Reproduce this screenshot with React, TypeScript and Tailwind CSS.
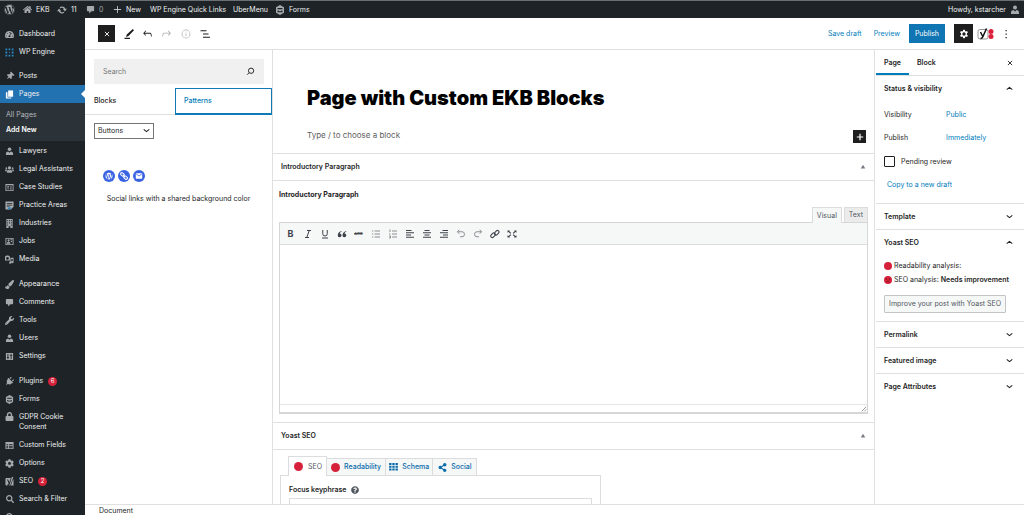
import React from "react";
import {
  FaWordpress,
  FaHome,
  FaTachometerAlt,
  FaThumbtack,
  FaPaintBrush,
  FaWrench,
  FaPlug,
  FaLock,
  FaUsers,
  FaCog,
  FaSearch,
  FaShareAlt,
  FaQuestionCircle,
} from "react-icons/fa";

type SvgProps = { className?: string; children: React.ReactNode; box?: string };

function Svg({ className = "size-[9px]", children, box = "0 0 20 20" }: SvgProps) {
  return (
    <svg viewBox={box} className={className} fill="currentColor" aria-hidden="true">
      {children}
    </svg>
  );
}

const PersonIcon = ({ className }: { className?: string }) => (
  <Svg className={className}>
    <circle cx="10" cy="5" r="4" />
    <path d="M2 18v-3c0-3 2-4.500 5-5l3 3 3-3c3 .5 5 2 5 5v3z" />
  </Svg>
);
const CommentIcon = ({ className }: { className?: string }) => (
  <Svg className={className}>
    <path d="M4 2h12c1 0 2 1 2 2v8c0 1-1 2-2 2h-4l-5 5v-5H4c-1 0-2-1-2-2V4c0-1 1-2 2-2z" />
  </Svg>
);
const GravityIcon = ({ className }: { className?: string }) => (
  <Svg className={className}>
    <path
      fillRule="evenodd"
      d="M10 0l8 4.500v11L10 20l-8-4.500v-11zM5 6v2.500h10V6zM5 11v3.500h10V11h-2.500v1.500h-5V11z"
    />
  </Svg>
);
const PagesIcon = () => (
  <Svg>
    <path d="M7 1h11v14H7z" />
    <path d="M2 5h3.500v11.500H14V19H2z" />
  </Svg>
);
const EngineIcon = () => (
  <Svg className="size-[9px] text-[#2687c4]">
    <path d="M1 1h4v4H1zM8 1h4v4H8zM15 1h4v4h-4zM1 8h4v4H1zM15 8h4v4h-4zM1 15h4v4H1zM8 15h4v4H8zM15 15h4v4h-4zM9 9h2v2H9z" />
  </Svg>
);
const CardIcon = () => (
  <Svg>
    <path
      fillRule="evenodd"
      d="M1 2h18v16H1zM3 5v11h14V5zM5 7h4v3H5zM11 7h4v1.500h-4zM11 10h4v1.500h-4zM5 12h4v2H5zM11 13h4v1.500h-4z"
    />
  </Svg>
);
const NoteIcon = () => (
  <Svg>
    <path fillRule="evenodd" d="M1 1h18v12l-6 6H1zM4 5v1.500h12V5zM4 8.500V10h12V8.500zM4 12v1.500h6V12z" />
    <path d="M7 14h6v4H7z" fill="#2687c4" />
  </Svg>
);
const BuildingIcon = () => (
  <Svg>
    <path
      fillRule="evenodd"
      d="M3 0h14v20h-5v-4H8v4H3zM5 2v3h2V2zM9 2v3h2V2zM13 2v3h2V2zM5 7v3h2V7zM9 7v3h2V7zM13 7v3h2V7zM5 12v3h2v-3zM13 12v3h2v-3z"
    />
  </Svg>
);
const JobsIcon = () => (
  <Svg>
    <path fillRule="evenodd" d="M1 2h18v16H1zM3 4v12h14V4z" />
    <circle cx="8" cy="7.500" r="2.300" />
    <path d="M4 15c0-3 1-4.500 4-4.500s4 1.500 4 4.500zM12 5h4v2h-4zM13 9h3v2h-3z" />
  </Svg>
);
const MediaIcon = () => (
  <Svg>
    <path
      fillRule="evenodd"
      d="M0 3h2l1-2h5l1 2h2v9H0zM5.500 4.500a3 3 0 100 6 3 3 0 000-6z"
    />
    <path d="M13 6h6v10a2.500 2.500 0 11-2-2.500V9h-3v8a2.500 2.500 0 11-2-2.500V6z" />
  </Svg>
);
const SettingsIcon = () => (
  <Svg>
    <path
      fillRule="evenodd"
      d="M2 2h16v16H2zM5.500 4v7H4v2h1.500v3h2v-3H9v-2H7.500V4zM12.500 4v3H11v2h1.500v7h2V9H16V7h-1.500V4z"
    />
  </Svg>
);
const TableIcon = () => (
  <Svg>
    <path
      fillRule="evenodd"
      d="M1 2h18v16H1zM3 7v2h4V7zM9 7v2h8V7zM3 10.500v2h4v-2zM9 10.500v2h8v-2zM3 14v2h4v-2zM9 14v2h8v-2z"
    />
  </Svg>
);
const YoastIcon = ({ className }: { className?: string }) => (
  <Svg className={className}>
    <path
      fillRule="evenodd"
      d="M4 2h9l-3.500 9.500L7 5.500H4.500l3.700 9c-.5 1.500-1.200 2-2.700 2V19H4c-2 0-3-1-3-3V5c0-2 1-3 3-3zM15 0h3.500l-7 19H8c2-1 2.500-2 3-4zM18 5c1 1 1 1.500 1 3v11h-6z"
    />
  </Svg>
);
const Chevron = ({ up = false }: { up?: boolean }) => (
  <svg viewBox="0 0 10 10" className="size-[7px] text-[#1e1e1e]" fill="none" stroke="currentColor" strokeWidth="1.500" aria-hidden="true">
    <path d={up ? "M1 6.500L5 3.500l4 3" : "M1 3.500L5 6.500l4-3"} />
  </svg>
);

type Item = { name: string; icon: React.ReactNode; badge?: string; active?: boolean; tall?: boolean; iconOnly?: boolean };

const fa = "size-[9px]";

const topItems: Item[] = [
  { name: "Dashboard", icon: <FaTachometerAlt className={fa} /> },
  { name: "WP Engine", icon: <EngineIcon /> },
];
const pageItems: Item[] = [
  { name: "Posts", icon: <FaThumbtack className="size-2 rotate-45" /> },
  { name: "Pages", icon: <PagesIcon />, active: true },
];
const typeItems: Item[] = [
  { name: "Lawyers", icon: <PersonIcon /> },
  { name: "Legal Assistants", icon: <FaUsers className={fa} /> },
  { name: "Case Studies", icon: <CardIcon /> },
  { name: "Practice Areas", icon: <NoteIcon /> },
  { name: "Industries", icon: <BuildingIcon /> },
  { name: "Jobs", icon: <JobsIcon /> },
  { name: "Media", icon: <MediaIcon /> },
];
const siteItems: Item[] = [
  { name: "Appearance", icon: <FaPaintBrush className={fa} /> },
  { name: "Comments", icon: <CommentIcon /> },
  { name: "Tools", icon: <FaWrench className={fa} /> },
  { name: "Users", icon: <PersonIcon /> },
  { name: "Settings", icon: <SettingsIcon /> },
];
const pluginItems: Item[] = [
  { name: "Plugins", icon: <FaPlug className="size-[9px] rotate-45" />, badge: "6" },
  { name: "Forms", icon: <GravityIcon /> },
  { name: "GDPR Cookie Consent", icon: <FaLock className={fa} />, tall: true },
  { name: "Custom Fields", icon: <TableIcon /> },
  { name: "Options", icon: <FaCog className={fa} /> },
  { name: "SEO", icon: <YoastIcon />, badge: "2" },
  { name: "Search & Filter", icon: <FaSearch className="size-2" /> },
  { name: "More", icon: <FaSearch className="size-2" />, iconOnly: true },
];

function MenuGroup({ items, className = "" }: { items: Item[]; className?: string }) {
  return (
    <ul className={className}>
      {items.map((item) => (
        <li key={item.name}>
          <a
            href="#"
            aria-label={item.iconOnly ? item.name : undefined}
            className={
              "relative flex gap-[5px] pl-[5px] pr-1 text-[#f0f0f1] " +
              (item.tall ? "h-7 items-start pt-1 " : "h-[18px] items-center ") +
              (item.active ? "bg-[#2271b1]" : "")
            }
          >
            <span className={"flex w-[9px] shrink-0 justify-center " + (item.active ? "text-white" : "text-[#a7aaad]")}>{item.icon}</span>
            {!item.iconOnly && <span className="leading-[10px]">{item.name}</span>}
            {item.badge && (
              <span className="flex size-[9px] items-center justify-center rounded-full bg-[#d6213a] text-[6px] leading-none text-white">
                {item.badge}
              </span>
            )}
            {item.active && (
              <span className="absolute right-0 top-1/2 size-0 -translate-y-1/2 border-y-4 border-r-4 border-y-transparent border-r-white" />
            )}
          </a>
        </li>
      ))}
    </ul>
  );
}

function AdminBar() {
  return (
    <header className="flex h-[18px] shrink-0 items-center border-t border-[#687076] bg-[#1d2327] pl-1 pr-1 text-[#f0f0f1]">
      <a href="#" aria-label="About WordPress" className="w-[19px] text-[#a7aaad]">
        <FaWordpress className="size-[11px]" />
      </a>
      <a href="#" className="flex w-[34px] items-center gap-1">
        <FaHome className="size-[9px] text-[#a7aaad]" />
        EKB
      </a>
      <a href="#" className="flex w-[29px] items-center gap-1">
        <Svg className="size-[10px] text-[#a7aaad]">
          <path d="M10 3c3 0 5.500 1.800 6.500 4.500H20L15.800 13 11.500 7.500h2.300A4.800 4.800 0 0010 5.400c-1.200 0-2.300.5-3.100 1.200L5.200 4.900A7 7 0 0110 3zM4.200 7l4.300 5.500H6.200a4.800 4.800 0 003.800 2.100c1.200 0 2.300-.5 3.100-1.200l1.700 1.700A7 7 0 013.500 12.500H0z" />
        </Svg>
        11
      </a>
      <a href="#" className="flex w-[27px] items-center gap-1 text-[#a7aaad]">
        <CommentIcon />0
      </a>
      <a href="#" className="flex w-[37px] items-center gap-1">
        <Svg className="size-[9px] text-[#c3c4c7]">
          <path d="M9 2h2v7h7v2h-7v7H9v-7H2V9h7z" />
        </Svg>
        New
      </a>
      <a href="#" className="w-[83px]">WP Engine Quick Links</a>
      <a href="#" className="w-[42px]">UberMenu</a>
      <a href="#" className="flex items-center gap-1">
        <GravityIcon className="size-[10px] text-[#a7aaad]" />
        Forms
      </a>
      <a href="#" className="ml-auto flex items-center gap-1">
        Howdy, kstarcher
        <PersonIcon className="size-[10px] text-[#a7aaad]" />
      </a>
    </header>
  );
}

function EditorHeader() {
  return (
    <div className="flex h-8 shrink-0 items-center justify-between border-b border-[#e0e0e0] pl-[13px] pr-3">
      <div className="flex items-center text-[#1e1e1e]">
        <button aria-label="Close inserter" className="mr-1 flex h-[17px] w-[17px] items-center justify-center bg-[#1e1e1e] text-white">
          <svg viewBox="0 0 10 10" className="size-[6px]" stroke="currentColor" strokeWidth="1.500" aria-hidden="true">
            <path d="M1.500 1.500l7 7M8.500 1.500l-7 7" />
          </svg>
        </button>
        <button aria-label="Edit" className="flex w-[19px] justify-center">
          <Svg className="size-3" box="0 0 24 24">
            <path d="M19.500 2l2.500 2.500L11 16l-5 2 1.500-5zM3 19.500h11V22H3z" />
          </Svg>
        </button>
        <button aria-label="Undo" className="flex w-[19px] justify-center">
          <Svg className="size-[13px]" box="0 0 24 24">
            <path d="M18.300 11.700c-.6-.6-1.400-.9-2.300-.9H6.700l2.900-3.300-1.100-1-4.500 5L8.500 16l1-1-2.700-2.700H16c.5 0 .9.200 1.300.5 1 1 1 3.400 1 4.500v.3h1.500v-.2c0-1.500 0-4.300-1.500-5.700z" />
          </Svg>
        </button>
        <button aria-label="Redo" className="flex w-[19px] justify-center text-[#b0b0b0]">
          <Svg className="size-[13px]" box="0 0 24 24">
            <path d="M15.600 6.500l-1.100 1 2.900 3.300H8c-.9 0-1.700.3-2.300.9-1.400 1.500-1.400 4.200-1.400 5.600v.2h1.500v-.3c0-1.100 0-3.500 1-4.500.3-.3.700-.5 1.300-.5h9.200L14.500 15l1.100 1.100 4.600-4.600z" />
          </Svg>
        </button>
        <button aria-label="Details" className="flex w-[19px] justify-center text-[#b0b0b0]">
          <Svg className="size-3" box="0 0 24 24">
            <path d="M12 3.200a8.800 8.800 0 100 17.600 8.800 8.800 0 000-17.600zm0 16.100a7.300 7.300 0 110-14.600 7.300 7.300 0 010 14.600zM11.200 11h1.600v5.500h-1.600zM11.200 7.500h1.600v1.700h-1.600z" />
          </Svg>
        </button>
        <button aria-label="List view" className="flex w-[19px] justify-center">
          <Svg className="size-3" box="0 0 24 24">
            <path d="M3 4.500h12v2H3zM8 11h11v2H8zM8 17.500h14v2H8z" />
          </Svg>
        </button>
      </div>
      <div className="flex items-center text-[#007cba]">
        <button className="mr-3">Save draft</button>
        <button className="mr-[9px]">Preview</button>
        <button className="mr-[9px] h-[19px] bg-[#0f75b3] px-[6px] text-white">Publish</button>
        <button aria-label="Settings" className="flex size-[19px] items-center justify-center bg-[#1e1e1e] text-white">
          <svg viewBox="0 0 24 24" className="size-[10px]" fill="currentColor" aria-hidden="true">
            <path
              fillRule="evenodd"
              d="M10 2h4l.5 3 2 1.100L19.400 5l2 3.400-2.400 2v3.200l2.400 2-2 3.400-2.900-1.100-2 1.100-.5 3h-4l-.5-3-2-1.100L4.600 19l-2-3.400 2.400-2v-3.200l-2.400-2L4.600 5l2.900 1.100 2-1.100zM12 8a4 4 0 100 8 4 4 0 000-8z"
            />
          </svg>
        </button>
        <button aria-label="Yoast SEO" className="ml-1 flex w-[18px] items-center">
          <svg viewBox="0 0 34 24" className="h-3 w-[17px]" aria-hidden="true">
            <rect x="2" y="3" width="20" height="19" rx="4" fill="#fff" stroke="#777" strokeWidth="1.500" />
            <path d="M7 8l4.500 9M19 1l-7.500 17c-.8 2-2 3-4.500 3" fill="none" stroke="#111" strokeWidth="3" />
            <circle cx="28" cy="7" r="5" fill="#dc1f3b" />
            <circle cx="28" cy="17" r="5" fill="#dc1f3b" />
          </svg>
        </button>
        <button aria-label="Options" className="flex w-[17px] justify-end text-[#1e1e1e]">
          <Svg className="size-3" box="0 0 24 24">
            <path d="M11 4h2.500v2.500H11zM11 11h2.500v2.500H11zM11 18h2.500v2.500H11z" />
          </Svg>
        </button>
      </div>
    </div>
  );
}

function Inserter() {
  return (
    <section className="w-[188px] shrink-0 border-r border-[#e0e0e0] pt-[9px]">
      <label className="ml-[9px] mr-2 flex h-[25px] items-center bg-[#f0f0f0] px-[9px]">
        <input type="search" aria-label="Search" placeholder="Search" className="min-w-0 flex-1 bg-transparent outline-none placeholder:text-[#757575]" />
        <svg viewBox="0 0 24 24" className="size-[9px]" fill="none" stroke="#1e1e1e" strokeWidth="2.500" aria-hidden="true">
          <circle cx="13.500" cy="10" r="7" />
          <path d="M8.500 15L3 20.500" />
        </svg>
      </label>
      <div role="tablist" className="mt-1 grid h-[27px] grid-cols-[90px_1fr] border-b border-[#e0e0e0] font-medium">
        <button role="tab" className="pl-[9px] text-left">Blocks</button>
        <button role="tab" aria-selected="true" className="-mb-px border border-b-2 border-[#0f7ab5] pl-2 text-left text-[#007cba]">
          Patterns
        </button>
      </div>
      <div className="relative ml-[9px] mt-2 w-[60px]">
        <select aria-label="Pattern category" className="h-4 w-full appearance-none border border-[#757575] bg-white pl-[3px] text-[#1e1e1e]">
          <option>Buttons</option>
        </select>
        <span className="pointer-events-none absolute right-1 top-1">
          <Chevron />
        </span>
      </div>
      <div className="ml-[18px] mt-[31px] flex gap-[3px] text-white">
        <a href="#" aria-label="WordPress" className="flex size-3 items-center justify-center rounded-full bg-[#3962e3]">
          <FaWordpress className="size-2" />
        </a>
        <a href="#" aria-label="Link" className="flex size-3 items-center justify-center rounded-full bg-[#3962e3]">
          <svg viewBox="0 0 20 20" className="size-2" fill="none" stroke="currentColor" strokeWidth="2.500" aria-hidden="true">
            <rect x="1" y="3" width="10" height="6" rx="3" transform="rotate(40 6 6)" />
            <rect x="9" y="11" width="10" height="6" rx="3" transform="rotate(40 14 14)" />
            <path d="M7 7l6 6" />
          </svg>
        </a>
        <a href="#" aria-label="Mail" className="flex size-3 items-center justify-center rounded-full bg-[#3962e3]">
          <svg viewBox="0 0 20 20" className="size-2" aria-hidden="true">
            <rect x="2" y="3" width="16" height="14" rx="1.500" fill="currentColor" />
            <path d="M3 5l7 5 7-5" fill="none" stroke="#3962e3" strokeWidth="2" />
          </svg>
        </a>
      </div>
      <p className="mt-3 text-center">Social links with a shared background color</p>
    </section>
  );
}

const line = (d: string) => (
  <svg viewBox="0 0 20 20" className="size-[10px]" fill="none" stroke="currentColor" strokeWidth="2" aria-hidden="true">
    <path d={d} />
  </svg>
);

const tools: { name: string; icon: React.ReactNode; dim?: boolean }[] = [
  { name: "Bold", icon: <span className="text-[9px] font-bold">B</span> },
  { name: "Italic", icon: line("M8 3h8M4 17h8M12.500 3l-5 14") },
  { name: "Underline", icon: line("M5.500 2v7.500a4.500 4.500 0 009 0V2M4 18h12") },
  {
    name: "Blockquote",
    icon: (
      <Svg className="size-[10px]">
        <path d="M9 4C6 4.500 1.500 7 1.500 12.500A3.800 3.800 0 105.500 9C6 7 7.500 6 9 5.500zM18.500 4c-3 .5-7.500 3-7.500 8.500A3.800 3.800 0 1015 9c.5-2 2-3 3.500-3.500z" />
      </Svg>
    ),
  },
  { name: "Strikethrough", icon: <span className="text-[4px] font-medium line-through">ABC</span> },
  { name: "Bulleted list", icon: line("M7 4h11M7 10h11M7 16h11M2 4h2.500M2 10h2.500M2 16h2.500"), dim: true },
  { name: "Numbered list", icon: line("M8 4h10M8 10h10M8 16h10M4 1v5M2 10h3M2 14h3v4H2"), dim: true },
  { name: "Align left", icon: line("M2 3h11M2 7.500h16M2 12h10M2 16.500h16") },
  { name: "Align center", icon: line("M5 3h10M2 7.500h16M5 12h10M2 16.500h16") },
  { name: "Align right", icon: line("M7 3h11M2 7.500h16M8 12h10M2 16.500h16") },
  { name: "Undo", icon: line("M6.500 1.500L3 5.500l3.500 4M3 5.500h9a5 5 0 010 10H8"), dim: true },
  { name: "Redo", icon: line("M13.500 1.500L17 5.500l-3.500 4M17 5.500H8a5 5 0 000 10h4"), dim: true },
  {
    name: "Insert link",
    icon: (
      <svg viewBox="0 0 20 20" className="size-[10px]" fill="none" stroke="currentColor" strokeWidth="2.200" aria-hidden="true">
        <rect x="1" y="9.500" width="10" height="6" rx="3" transform="rotate(-45 6 12.500)" />
        <rect x="8.500" y="4.500" width="10" height="6" rx="3" transform="rotate(-45 13.500 7.500)" />
      </svg>
    ),
  },
  {
    name: "Fullscreen",
    icon: (
      <Svg className="size-[10px]">
        <path d="M1 3h5L4.800 4.500 8.500 8 7 9.500 3 6 1 7.500zM19 3h-5l1.200 1.500L11.500 8 13 9.500 17 6l2 1.500zM1 17h5l-1.200-1.500 3.700-3.500L7 10.500 3 14l-2-1.500zM19 17h-5l1.200-1.500-3.700-3.500 1.500-1.500L17 14l2-1.500z" />
      </Svg>
    ),
  },
];

function PanelTitle({ children }: { children: React.ReactNode }) {
  return (
    <h2 className="flex h-7 items-center justify-between border-y border-[#e0e0e0] pl-2 pr-2 font-semibold">
      {children}
      <svg viewBox="0 0 8 8" className="size-[6px]" fill="#787c82" aria-hidden="true">
        <path d="M4 1l3 5h-6z" />
      </svg>
    </h2>
  );
}

function Editor() {
  return (
    <main className="min-w-0 flex-1 overflow-hidden">
      <div className="pl-[34px] pr-2 pt-[34px]">
        <h1 className="text-[20px] font-black leading-7 text-black">Page with Custom EKB Blocks</h1>
        <div className="mt-[18px] flex h-[13px] items-start">
          <input aria-label="Block" placeholder="Type / to choose a block" className="min-w-0 flex-1 text-[8px] outline-none placeholder:text-[#606060]" />
          <button aria-label="Add block" className="flex size-[13px] items-center justify-center bg-[#1e1e1e] text-white">
            <svg viewBox="0 0 10 10" className="size-2" stroke="currentColor" strokeWidth="1.500" aria-hidden="true">
              <path d="M5 1v8M1 5h8" />
            </svg>
          </button>
        </div>
      </div>
      <div className="mt-[10px]">
        <PanelTitle>Introductory Paragraph</PanelTitle>
        <div className="px-[6px] pb-2">
          <label htmlFor="intro" className="mt-[9px] block font-bold leading-[10px]">Introductory Paragraph</label>
          <div className="mt-[7px] flex h-[15px] items-stretch justify-end gap-[2px] text-[#50575e]">
            <button className="relative z-10 -mb-px border border-b-0 border-[#dcdcde] bg-[#f6f7f7] px-1">Visual</button>
            <button className="border border-b-0 border-[#dcdcde] bg-[#ebebeb] px-1">Text</button>
          </div>
          <div className="border border-[#d5d6d8] border-b-2">
            <div className="flex h-[22px] items-center border-b border-[#dcdcde] bg-[#f6f7f7] pl-[2px]">
              {tools.map((t) => (
                <button
                  key={t.name}
                  aria-label={t.name}
                  className={"flex w-[17px] items-center justify-center leading-none " + (t.dim ? "text-[#8c8f94]" : "text-[#3c434a]")}
                >
                  {t.icon}
                </button>
              ))}
            </div>
            <textarea id="intro" className="block h-[159px] w-full resize-none outline-none" />
            <div className="flex h-2 items-end justify-end border-t border-[#e5e5e5]">
              <svg viewBox="0 0 8 8" className="size-[6px]" stroke="#787c82" aria-hidden="true">
                <path d="M1 7l6-6M4.500 7L7 4.500" />
              </svg>
            </div>
          </div>
        </div>
        <PanelTitle>Yoast SEO</PanelTitle>
        <div className="pl-[7px] pt-[6px]">
          <div role="tablist" className="flex h-[19px] items-end pl-2 text-[#0a6cab]">
            <button role="tab" aria-selected="true" className="relative z-10 -mb-px flex h-5 items-center gap-[5px] border border-b-0 border-[#dcdcde] bg-white pl-[5px] pr-1 text-[#50575e]">
              <span className="size-[9px] rounded-full bg-[#d6213a]" />
              SEO
            </button>
            <button role="tab" className="flex h-[17px] items-center gap-1 border border-b-0 border-l-0 border-[#dcdcde] bg-[#f6f7f7] px-1 font-medium">
              <span className="size-[9px] rounded-full bg-[#d6213a]" />
              Readability
            </button>
            <button role="tab" className="flex h-[17px] items-center gap-1 border border-b-0 border-l-0 border-[#dcdcde] bg-[#f6f7f7] px-[3px] font-medium">
              <Svg className="h-2 w-[9px]" box="0 0 22 20">
                <path d="M0 0h6v5H0zM8 0h6v5H8zM16 0h6v5h-6zM0 7h6v5H0zM8 7h6v5H8zM16 7h6v5h-6zM0 14h6v5H0zM8 14h6v5H8zM16 14h6v5h-6z" />
              </Svg>
              Schema
            </button>
            <button role="tab" className="flex h-[17px] items-center gap-1 border border-b-0 border-l-0 border-[#dcdcde] bg-[#f6f7f7] px-1 pl-[5px] font-medium">
              <FaShareAlt className="size-[9px]" />
              Social
            </button>
          </div>
          <div className="w-[321px] border border-[#dcdcde] px-2 pt-2">
            <label htmlFor="keyphrase" className="flex h-3 items-center gap-[5px] font-semibold">
              Focus keyphrase
              <FaQuestionCircle className="size-2 text-[#50575e]" />
            </label>
            <input id="keyphrase" className="mt-[2px] h-4 w-full border border-[#dcdcde]" />
          </div>
        </div>
      </div>
    </main>
  );
}

function SideTitle({ children, open = false, last = false }: { children: React.ReactNode; open?: boolean; last?: boolean }) {
  return (
    <h2 className={open || last ? "" : "border-b border-[#e0e0e0]"}>
      <button aria-expanded={open} className="flex h-[25px] w-full items-center justify-between pl-2 pr-[11px] font-semibold">
        {children}
        <Chevron up={open} />
      </button>
    </h2>
  );
}

function Sidebar() {
  return (
    <aside className="w-[150px] shrink-0 border-l border-[#e0e0e0] pl-px">
      <div role="tablist" className="flex h-[26px] items-stretch border-b border-[#e0e0e0] font-semibold">
        <button role="tab" aria-selected="true" className="border-b-2 border-[#007cba] px-2 pt-[3px]">Page</button>
        <button role="tab" className="px-2 pt-px">Block</button>
        <button aria-label="Close settings" className="ml-auto pr-[11px]">
          <svg viewBox="0 0 10 10" className="size-[6px]" stroke="currentColor" strokeWidth="1.500" aria-hidden="true">
            <path d="M1.500 1.500l7 7M8.500 1.500l-7 7" />
          </svg>
        </button>
      </div>
      <div className="border-b border-[#e0e0e0]">
        <SideTitle open>Status &amp; visibility</SideTitle>
        <dl className="grid grid-cols-[62px_1fr] gap-y-[11px] pl-2 pt-2 leading-3">
          <dt>Visibility</dt>
          <dd><a href="#" className="text-[#007cba]">Public</a></dd>
          <dt>Publish</dt>
          <dd><a href="#" className="text-[#007cba]">Immediately</a></dd>
        </dl>
        <label className="mt-3 flex items-center gap-[6px] pl-2 leading-[11px]">
          <input type="checkbox" className="size-[11px] appearance-none rounded-[1px] border border-[#1e1e1e] bg-white" />
          Pending review
        </label>
        <a href="#" className="mb-3 ml-[11px] mt-3 block leading-3 text-[#007cba]">Copy to a new draft</a>
      </div>
      <SideTitle>Template</SideTitle>
      <div className="border-b border-[#e0e0e0] pb-2">
        <SideTitle open>Yoast SEO</SideTitle>
        <div className="flex flex-col gap-[2px] pl-2 pt-[5px] leading-3">
          <p className="flex items-center gap-[2px]">
            <span className="size-2 rounded-full bg-[#d6213a]" />
            Readability analysis:
          </p>
          <p className="flex items-center gap-[2px]">
            <svg viewBox="0 0 18 18" className="size-2" aria-hidden="true">
              <circle cx="9" cy="9" r="9" fill="#d6213a" />
              <circle cx="5.500" cy="7" r="1.500" fill="#6b0f1c" />
              <circle cx="12.500" cy="7" r="1.500" fill="#6b0f1c" />
              <path d="M5 14c1-3 7-3 8 0" fill="none" stroke="#6b0f1c" strokeWidth="1.500" />
            </svg>
            <span>SEO analysis: <strong className="font-semibold">Needs improvement</strong></span>
          </p>
        </div>
        <button className="ml-2 mt-[9px] h-[18px] rounded-[1px] border border-[#c3c4c7] bg-[#f6f7f7] px-1 text-[#50575e]">
          Improve your post with Yoast SEO
        </button>
      </div>
      <SideTitle>Permalink</SideTitle>
      <SideTitle>Featured image</SideTitle>
      <SideTitle last>Page Attributes</SideTitle>
    </aside>
  );
}

export default function App() {
  return (
    <div className="flex h-screen flex-col overflow-hidden bg-white font-['Inter','Liberation_Sans',sans-serif] text-[7px] leading-[10px] text-[#1e1e1e]">
      <AdminBar />
      <div className="flex min-h-0 flex-1">
        <nav aria-label="Main menu" className="w-[85px] shrink-0 overflow-hidden bg-[#1d2327] pt-[7px]">
          <MenuGroup items={topItems} />
          <MenuGroup items={pageItems} className="mt-[6px]" />
          <ul className="bg-[#2c3338] py-1 pl-[6px] leading-[15px]">
            <li><a href="#" className="text-[#b4b9be]">All Pages</a></li>
            <li><a href="#" className="font-semibold text-white">Add New</a></li>
          </ul>
          <MenuGroup items={typeItems} className="mt-px" />
          <MenuGroup items={siteItems} className="mt-[7px]" />
          <MenuGroup items={pluginItems} className="mt-[7px]" />
        </nav>
        <div className="flex min-w-0 flex-1 flex-col">
          <EditorHeader />
          <div className="flex min-h-0 flex-1">
            <Inserter />
            <Editor />
            <Sidebar />
          </div>
          <footer className="h-[11px] shrink-0 border-t border-[#e0e0e0] pl-[14px] pt-px">Document</footer>
        </div>
      </div>
    </div>
  );
}
